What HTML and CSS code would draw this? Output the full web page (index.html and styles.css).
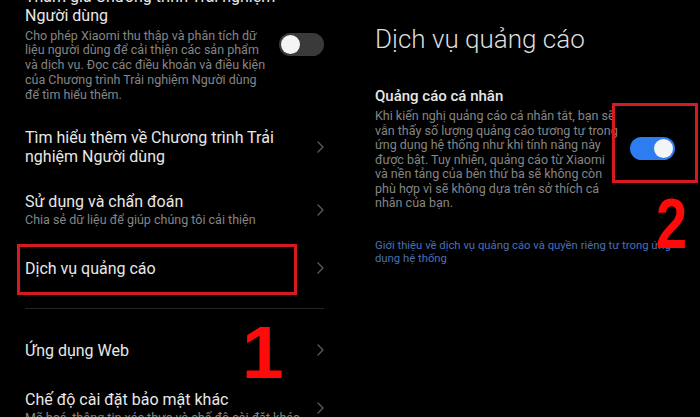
FILE: index.html
```html
<!DOCTYPE html>
<html lang="vi">
<head>
<meta charset="utf-8">
<title>Dịch vụ quảng cáo</title>
<link rel="stylesheet" href="styles.css">
</head>
<body>
<div class="screen">
  <section class="panel left">
    <div class="item">
      <div class="text">
        <div class="title">Tham gia Chương trình Trải nghiệm<br>Người dùng</div>
        <div class="desc">Cho phép Xiaomi thu thập và phân tích dữ<br>liệu người dùng để cải thiện các sản phẩm<br>và dịch vụ. Đọc các điều khoản và điều kiện<br>của Chương trình Trải nghiệm Người dùng<br>để tìm hiểu thêm.</div>
      </div>
      <span class="switch"><span class="knob"></span></span>
    </div>
    <div class="item">
      <div class="text">
        <div class="title">Tìm hiểu thêm về Chương trình Trải<br>nghiệm Người dùng</div>
      </div>
      <svg class="chev" viewBox="0 0 7 12"><polyline points="1,1 6,6 1,11"/></svg>
    </div>
    <div class="item">
      <div class="text">
        <div class="title">Sử dụng và chẩn đoán</div>
        <div class="sub">Chia sẻ dữ liệu để giúp chúng tôi cải thiện</div>
      </div>
      <svg class="chev" viewBox="0 0 7 12"><polyline points="1,1 6,6 1,11"/></svg>
    </div>
    <div class="item single">
      <div class="text">
        <div class="title">Dịch vụ quảng cáo</div>
      </div>
      <svg class="chev" viewBox="0 0 7 12"><polyline points="1,1 6,6 1,11"/></svg>
    </div>
    <div class="divider"></div>
    <div class="item single">
      <div class="text">
        <div class="title">Ứng dụng Web</div>
      </div>
      <svg class="chev" viewBox="0 0 7 12"><polyline points="1,1 6,6 1,11"/></svg>
    </div>
    <div class="item">
      <div class="text">
        <div class="title">Chế độ cài đặt bảo mật khác</div>
        <div class="sub">Mã hoá, thông tin xác thực và chế độ cài đặt khác</div>
      </div>
      <svg class="chev" viewBox="0 0 7 12"><polyline points="1,1 6,6 1,11"/></svg>
    </div>
  </section>

  <section class="panel right">
    <h1 class="page-title">Dịch vụ quảng cáo</h1>
    <div class="item">
      <div class="text">
        <div class="title">Quảng cáo cá nhân</div>
        <div class="desc">Khi kiến nghị quảng cáo cá nhân tắt, bạn sẽ<br>vẫn thấy số lượng quảng cáo tương tự trong<br>ứng dụng hệ thống như khi tính năng này<br>được bật. Tuy nhiên, quảng cáo từ Xiaomi<br>và nền tảng của bên thứ ba sẽ không còn<br>phù hợp vì sẽ không dựa trên sở thích cá<br>nhân của bạn.</div>
      </div>
      <span class="switch on"><span class="knob"></span></span>
    </div>
    <p class="link">Giới thiệu về dịch vụ quảng cáo và quyền riêng tư trong ứng<br>dụng hệ thống</p>
  </section>

  <div class="mark mark-1"></div>
  <div class="mark mark-2"></div>
  <div class="num num-1">1</div>
  <div class="num num-2">2</div>
</div>
</body>
</html>
```
FILE: styles.css
```css
html, body {
  margin: 0;
  background: #000;
}

.screen {
  position: relative;
  width: 700px;
  height: 417px;
  overflow: hidden;
  display: flex;
  align-items: flex-start;
  font-family: Roboto, "Noto Sans", sans-serif;
  color: #e8e8e8;
  background: #000;
}

.panel {
  width: 350px;
  box-sizing: border-box;
  flex: none;
}

.left {
  padding: 0 26px 0 25px;
  margin-top: -26px;
}

.item {
  display: flex;
  align-items: center;
  justify-content: space-between;
  gap: 12px;
  padding: 13px 0;
}

.text {
  flex: 1;
  min-width: 0;
}

.single .text {
  min-height: 28px;
  display: flex;
  align-items: center;
}

.title {
  font-size: 16px;
  line-height: 19px;
  color: #e8e8e8;
  white-space: nowrap;
}

.desc {
  font-size: 12.5px;
  line-height: 14.8px;
  color: #858585;
  margin-top: 3.5px;
  white-space: nowrap;
}

.sub {
  font-size: 12.5px;
  line-height: 14.8px;
  color: #858585;
  margin-top: 2px;
  white-space: nowrap;
}

.chev {
  width: 7px;
  height: 12px;
  flex: none;
  fill: none;
  stroke: #5c5c5c;
  stroke-width: 1.3;
  stroke-linecap: round;
  stroke-linejoin: round;
}

.switch {
  width: 45px;
  height: 23px;
  border-radius: 12px;
  background: #3a3a3a;
  flex: none;
  display: flex;
  align-items: center;
  padding: 0 2px;
  box-sizing: border-box;
}

.knob {
  width: 19px;
  height: 19px;
  border-radius: 50%;
  background: #f4f4f4;
}

.switch.on {
  background: #2d7cf0;
  justify-content: flex-end;
}

.divider {
  height: 1px;
  background: #252525;
  margin: 13px 0 14px;
}

.right {
  padding: 24px 25px 0 25px;
}

.page-title {
  margin: 0 0 33px;
  font-size: 26px;
  font-weight: 300;
  line-height: 30px;
  color: #dcdcdc;
  white-space: nowrap;
}

.right .item {
  padding: 0;
}

.right .title {
  font-size: 15px;
  font-weight: 500;
  line-height: 18px;
}

.right .desc {
  line-height: 14.5px;
  margin-top: 4px;
}

.link {
  margin: 28px 0 0;
  font-size: 11.3px;
  line-height: 13.5px;
  color: #4a70b4;
  white-space: nowrap;
}

.mark {
  position: absolute;
  border: 3px solid #d71a20;
  box-sizing: border-box;
}

.mark-1 {
  left: 17px;
  top: 244px;
  width: 280px;
  height: 51px;
}

.mark-2 {
  left: 612px;
  top: 103px;
  width: 86px;
  height: 80px;
}

.num {
  position: absolute;
  font-family: "Liberation Sans", Arial, sans-serif;
  font-weight: 700;
  color: #ff0a0a;
  line-height: 1;
  transform-origin: left top;
}

.num-1 {
  left: 242px;
  top: 315px;
  font-size: 75px;
}

.num-2 {
  left: 656px;
  top: 189px;
  font-size: 70px;
  transform: scaleX(0.8);
}
```
